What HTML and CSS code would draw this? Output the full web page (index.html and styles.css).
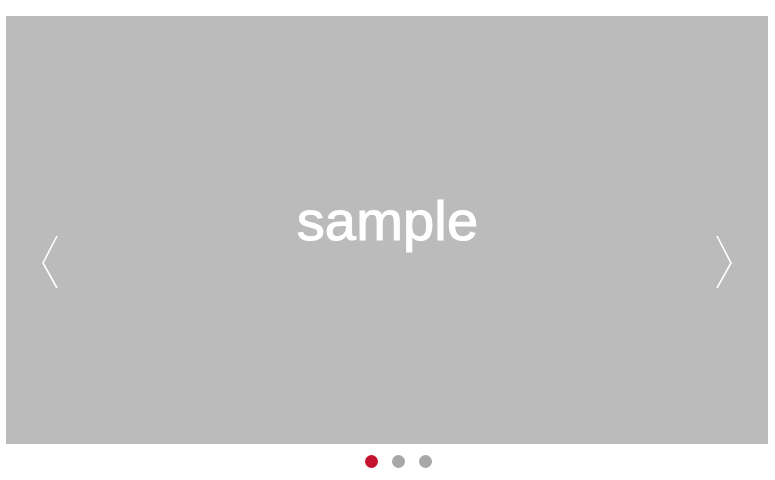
FILE: index.html
```html
<!DOCTYPE html>
<html lang="en">
<head>
<meta charset="utf-8">
<title>Slider</title>
<link rel="stylesheet" href="styles.css">
</head>
<body>
<div class="page">
  <div class="slider">
    <div class="slide"><span class="label">sample</span></div>
    <button class="arrow arrow-prev" aria-label="Previous">
      <svg width="20" height="56" viewBox="0 0 20 56"><polyline points="15,2 1,29 15,54" fill="none" stroke="#fff" stroke-width="1.6"/></svg>
    </button>
    <button class="arrow arrow-next" aria-label="Next">
      <svg width="20" height="56" viewBox="0 0 20 56"><polyline points="1,2 15,29 1,54" fill="none" stroke="#fff" stroke-width="1.6"/></svg>
    </button>
  </div>
  <div class="dots">
    <span class="dot active"></span>
    <span class="dot"></span>
    <span class="dot"></span>
  </div>
</div>
</body>
</html>
```
FILE: styles.css
```css
html, body {
  margin: 0;
  padding: 0;
  background: #fff;
}
.page {
  padding: 16px 7px 0 6px;
}
.slider {
  position: relative;
  height: 428px;
  background: #bbbbbb;
}
.slide {
  height: 100%;
  display: flex;
  align-items: center;
  justify-content: center;
}
.label {
  font-family: "Liberation Sans", Arial, sans-serif;
  font-size: 56px;
  color: #fff;
  -webkit-text-stroke: 1.1px #fff;
  letter-spacing: 0.2px;
  line-height: 1;
  margin-top: -18px;
  margin-left: 1px;
}
.arrow {
  position: absolute;
  top: 218px;
  width: 20px;
  height: 56px;
  padding: 0;
  border: 0;
  background: none;
  cursor: pointer;
}
.arrow svg { display: block; }
.arrow-prev { left: 36px; }
.arrow-next { right: 32px; }
.dots {
  display: flex;
  justify-content: center;
  gap: 14px;
  margin-top: 11px;
  padding-left: 22px;
}
.dot {
  width: 13px;
  height: 13px;
  border-radius: 50%;
  background: #a8a8a8;
}
.dot.active {
  background: #c4122f;
}
```
